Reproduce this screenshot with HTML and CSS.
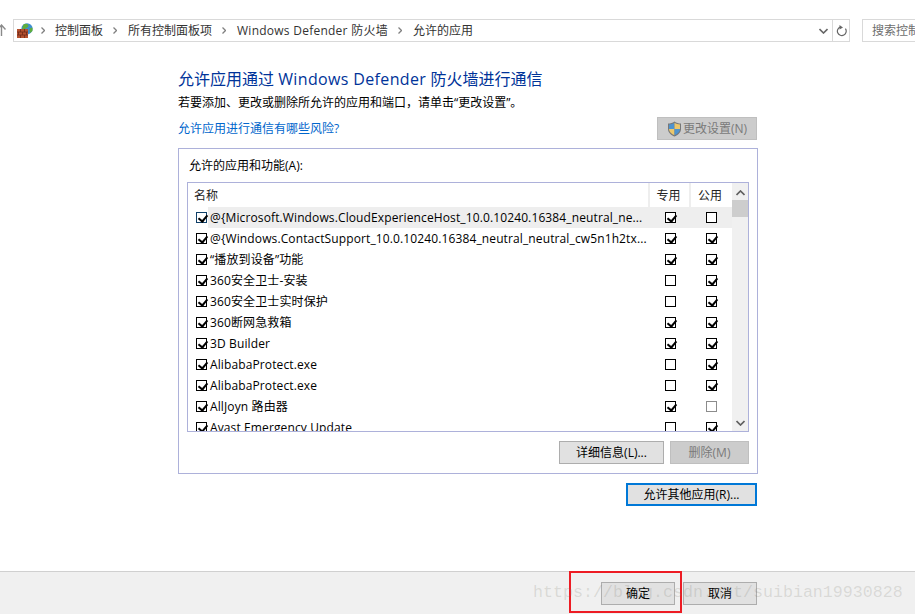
FILE: index.html
```html
<!DOCTYPE html>
<html lang="zh-CN">
<head>
<meta charset="utf-8">
<title>允许的应用</title>
<link rel="stylesheet" href="styles.css">
</head>
<body>
<div class="page">
  <header class="nav">
    <svg class="up" width="9" height="12" viewBox="0 0 9 12"><path d="M0.5 5.5 L4.5 1 L8.5 5.5 M4.5 1 V12" fill="none" stroke="#8a8a8a" stroke-width="1.4"/></svg>
    <div class="address">
      <div class="crumbs">
        <svg class="wall" width="16" height="16" viewBox="0 0 16 16">
          <circle cx="10" cy="5.8" r="5.6" fill="#3f8fd0"/>
          <path d="M6.5 1.5 C9 0 11 1 11.5 2.5 C11 5 9 4.5 8 6 L5 6 Z M12.5 5.5 L15.5 4.5 L15.5 8 L13 10 Z" fill="#5fae3c"/>
          <rect x="0" y="6" width="11" height="9" fill="#b4512f"/>
          <path d="M0 9 H11 M0 12 H11 M3.5 6 V9 M7.5 6 V9 M1.5 9 V12 M5.5 9 V12 M9.5 9 V12 M3.5 12 V15 M7.5 12 V15" stroke="#6e2a1a" stroke-width="0.8" fill="none"/>
        </svg>
        <svg class="sep" width="4" height="7" viewBox="0 0 4 7"><path d="M0.5 0.5 L3.5 3.5 L0.5 6.5" fill="none" stroke="#808080" stroke-width="1.3"/></svg>
        <span>控制面板</span>
        <svg class="sep" width="4" height="7" viewBox="0 0 4 7"><path d="M0.5 0.5 L3.5 3.5 L0.5 6.5" fill="none" stroke="#808080" stroke-width="1.3"/></svg>
        <span>所有控制面板项</span>
        <svg class="sep" width="4" height="7" viewBox="0 0 4 7"><path d="M0.5 0.5 L3.5 3.5 L0.5 6.5" fill="none" stroke="#808080" stroke-width="1.3"/></svg>
        <span class="wide">Windows Defender 防火墙</span>
        <svg class="sep" width="4" height="7" viewBox="0 0 4 7"><path d="M0.5 0.5 L3.5 3.5 L0.5 6.5" fill="none" stroke="#808080" stroke-width="1.3"/></svg>
        <span>允许的应用</span>
      </div>
      <div class="drop"><svg width="9" height="6" viewBox="0 0 9 6"><path d="M0.5 1 L4.5 5 L8.5 1" fill="none" stroke="#666" stroke-width="1.6"/></svg></div>
      <div class="refresh"><svg width="11" height="12" viewBox="0 0 11 12"><path d="M3 2.5 A4.4 4.4 0 1 0 8 2.5" fill="none" stroke="#666" stroke-width="1.2" transform="rotate(20 5.5 7)"/><path d="M3.5 0 L7 2.5 L3.5 4.5 Z" fill="#666"/></svg></div>
    </div>
    <div class="search">搜索控制面板</div>
  </header>

  <main class="content">
    <h1 class="title">允许应用通过 <span class="latin">Windows Defender</span> 防火墙进行通信</h1>
    <p class="intro">若要添加、更改或删除所允许的应用和端口，请单击“更改设置”。</p>
    <div class="linkrow">
      <a class="link">允许应用进行通信有哪些风险?</a>
      <button class="btn disabled change">
        <svg width="15" height="16" viewBox="0 0 15 16"><path d="M7.5 0.5 C9.5 2 11.5 2.5 14 2.5 V8 C14 11.5 11 14 7.5 15.5 C4 14 1 11.5 1 8 V2.5 C3.5 2.5 5.5 2 7.5 0.5 Z" fill="#777"/><path d="M7.5 1.7 V8 H2 V3.4 C4 3.3 6 2.8 7.5 1.7 Z" fill="#4e93cf"/><path d="M7.5 1.7 C9 2.8 11 3.3 13 3.4 V8 H7.5 Z" fill="#ecc76b"/><path d="M2 8 H7.5 V14.3 C4.8 13 2 11 2 8 Z" fill="#ecc76b"/><path d="M7.5 8 H13 C13 11 10.2 13 7.5 14.3 Z" fill="#4e93cf"/></svg>
        <span>更改设置(N)</span>
      </button>
    </div>

    <section class="group">
      <div class="group-label">允许的应用和功能(A):</div>
      <div class="list">
        <div class="list-main">
          <div class="list-head">
            <div class="col-name">名称</div>
            <div class="col-c">专用</div>
            <div class="col-c last">公用</div>
          </div>
          <div class="rows">
            <div class="row selected"><span class="cb on focus"></span><span class="name">@{Microsoft.Windows.CloudExperienceHost_10.0.10240.16384_neutral_ne...</span><span class="cell"><span class="cb on"></span></span><span class="cell"><span class="cb"></span></span></div>
            <div class="row"><span class="cb on"></span><span class="name">@{Windows.ContactSupport_10.0.10240.16384_neutral_neutral_cw5n1h2tx...</span><span class="cell"><span class="cb on"></span></span><span class="cell"><span class="cb on"></span></span></div>
            <div class="row"><span class="cb on"></span><span class="name">“播放到设备”功能</span><span class="cell"><span class="cb on"></span></span><span class="cell"><span class="cb on"></span></span></div>
            <div class="row"><span class="cb on"></span><span class="name">360安全卫士-安装</span><span class="cell"><span class="cb"></span></span><span class="cell"><span class="cb on"></span></span></div>
            <div class="row"><span class="cb on"></span><span class="name">360安全卫士实时保护</span><span class="cell"><span class="cb"></span></span><span class="cell"><span class="cb on"></span></span></div>
            <div class="row"><span class="cb on"></span><span class="name">360断网急救箱</span><span class="cell"><span class="cb on"></span></span><span class="cell"><span class="cb on"></span></span></div>
            <div class="row"><span class="cb on"></span><span class="name">3D Builder</span><span class="cell"><span class="cb on"></span></span><span class="cell"><span class="cb on"></span></span></div>
            <div class="row"><span class="cb on"></span><span class="name">AlibabaProtect.exe</span><span class="cell"><span class="cb"></span></span><span class="cell"><span class="cb on"></span></span></div>
            <div class="row"><span class="cb on"></span><span class="name">AlibabaProtect.exe</span><span class="cell"><span class="cb"></span></span><span class="cell"><span class="cb on"></span></span></div>
            <div class="row"><span class="cb on"></span><span class="name">AllJoyn 路由器</span><span class="cell"><span class="cb on"></span></span><span class="cell"><span class="cb dim"></span></span></div>
            <div class="row"><span class="cb on"></span><span class="name">Avast Emergency Update</span><span class="cell"><span class="cb"></span></span><span class="cell"><span class="cb on"></span></span></div>
          </div>
        </div>
        <div class="scrollbar">
          <svg class="arrow" width="9" height="6" viewBox="0 0 9 6"><path d="M0.5 5 L4.5 1 L8.5 5" fill="none" stroke="#606060" stroke-width="1.7"/></svg>
          <div class="thumb"></div>
          <svg class="arrow bottom" width="9" height="6" viewBox="0 0 9 6"><path d="M0.5 1 L4.5 5 L8.5 1" fill="none" stroke="#606060" stroke-width="1.7"/></svg>
        </div>
      </div>
      <div class="group-actions">
        <button class="btn details">详细信息(L)...</button>
        <button class="btn disabled remove">删除(M)</button>
      </div>
    </section>

    <div class="other-row"><button class="btn default other">允许其他应用(R)...</button></div>
  </main>

  <footer class="footer">
    <button class="btn foot">确定</button>
    <button class="btn foot">取消</button>
  </footer>
</div>
<div class="redbox"></div>
<div class="watermark">https://blog.csdn.net/suibian19930828</div>
</body>
</html>
```

FILE: styles.css
```css
* { box-sizing: border-box; }
html, body { margin: 0; padding: 0; }
body {
  width: 915px;
  height: 614px;
  overflow: hidden;
  background: #fff;
  color: #1a1a1a;
  font: 12px/16px "Open Sans", "Noto Sans CJK SC", sans-serif;
  position: relative;
}
.page { height: 614px; display: flex; flex-direction: column; }

.nav { height: 41px; padding-top: 19px; display: flex; align-items: flex-start; flex: none; }
.up { margin: 5px 0 0 -3px; flex: none; width: 9px; }
.address {
  margin-left: 7px; width: 837px; height: 23px; border: 1px solid #d9d9d9;
  display: flex; align-items: center; flex: none;
}
.crumbs { flex: 1; display: flex; align-items: center; padding-left: 3px; color: #333; white-space: nowrap; }
.wall { margin-right: 8px; }
.sep { margin: 0 11px 0 10px; flex: none; }
.wall + .sep { margin: 0 10px 0 0; }
.wide { letter-spacing: 0.25px; }
.drop { width: 18px; display: flex; justify-content: center; }
.refresh { width: 17px; height: 21px; border-left: 1px solid #d9d9d9; display: flex; align-items: center; justify-content: center; }
.search {
  margin-left: 12px; width: 60px; height: 23px; border: 1px solid #d9d9d9; border-right: 0;
  padding: 3px 0 0 9px; color: #6d6d6d; white-space: nowrap; overflow: hidden; flex: none;
}

.content { width: 580px; margin-left: 178px; flex: 1; }
.title { margin: 28px 0 0; font-size: 16px; line-height: 20px; font-weight: 400; color: #003399; }
.latin { letter-spacing: 0.36px; }
.intro { margin: 6px 0 0; line-height: 16px; color: #000; }
.linkrow { margin-top: 6px; height: 23px; display: flex; justify-content: space-between; align-items: flex-start; }
.link { color: #0066cc; margin-top: 4px; }

.btn {
  height: 23px; margin: 0; padding: 0; border: 1px solid #adadad; background: #e1e1e1; color: #000;
  font: inherit; display: inline-flex; align-items: center; justify-content: center;
}
.btn.disabled { background: #cccccc; border-color: #bfbfbf; color: #7a7a7a; }
.change { width: 100px; gap: 1px; margin-right: 1px; }
.change svg { flex: none; }

.group { margin-top: 8px; height: 326px; border: 1px solid #adb1da; padding: 9px 8px 0 8px; }
.group-label { height: 16px; color: #000; margin-bottom: 8px; padding-left: 2px; }
.list { height: 250px; border: 1px solid #adb1da; display: flex; overflow: hidden; }
.list-main { flex: 1; min-width: 0; }
.list-head { height: 24px; display: flex; color: #222; }
.col-name { width: 462px; padding: 5px 0 0 6px; border-right: 2px solid #eeeeee; flex: none; }
.col-c { width: 41px; text-align: center; padding: 5px 2px 0 0; border-right: 2px solid #eeeeee; flex: none; }
.col-c.last { border-right: 0; padding-right: 3px; }
.row { height: 21px; display: flex; align-items: center; padding-left: 8px; color: #000; width: 544px; }
.row .name {
  width: 442px; height: 21px; line-height: 21px; margin-left: 1px; padding-left: 2px;
  white-space: nowrap; overflow: hidden; flex: none; letter-spacing: 0.12px;
}
.cell { width: 41px; height: 21px; display: flex; align-items: center; justify-content: center; flex: none; }
.row.selected .name, .row.selected .cell { background: #eeeeee; }

.cb { width: 11px; height: 11px; border: 1px solid #000; background: #fff; display: block; flex: none; position: relative; }
.cb.on::after {
  content: ""; position: absolute; left: 2.5px; top: 0px; width: 4px; height: 7px;
  border: solid #000; border-width: 0 2px 2px 0; transform: rotate(40deg);
}
.cb.focus { border-color: #0f3f68; }
.cb.dim { border-color: #8c8c8c; }

.scrollbar { width: 16px; background: #f0f0f0; flex: none; margin-left: 1px; display: flex; flex-direction: column; align-items: center; }
.arrow { margin-top: 7px; flex: none; }
.thumb { width: 16px; height: 17px; background: #cdcdcd; margin-top: 4px; flex: none; }
.arrow.bottom { margin-top: auto; margin-bottom: 5px; }

.group-actions { margin-top: 9px; display: flex; justify-content: flex-end; gap: 6px; }
.details { width: 105px; }
.remove { width: 79px; }

.other-row { margin-top: 9px; display: flex; justify-content: flex-end; padding-right: 1px; }
.btn.other { width: 131px; border: 2px solid #0078d7; }

.footer {
  height: 43px; flex: none; background: #f0f0f0; border-top: 1px solid #d0d0d0;
  display: flex; justify-content: flex-end; gap: 8px; padding: 10px 158px 0 0;
}
.foot { width: 74px; }

.redbox { position: absolute; left: 569px; top: 571px; width: 113px; height: 42px; border: 2px solid #ed1c24; }
.watermark {
  position: absolute; left: 533px; top: 583px; font: 16.67px/20px "Liberation Mono", monospace;
  color: rgba(120,120,110,0.2); white-space: nowrap;
}
```
